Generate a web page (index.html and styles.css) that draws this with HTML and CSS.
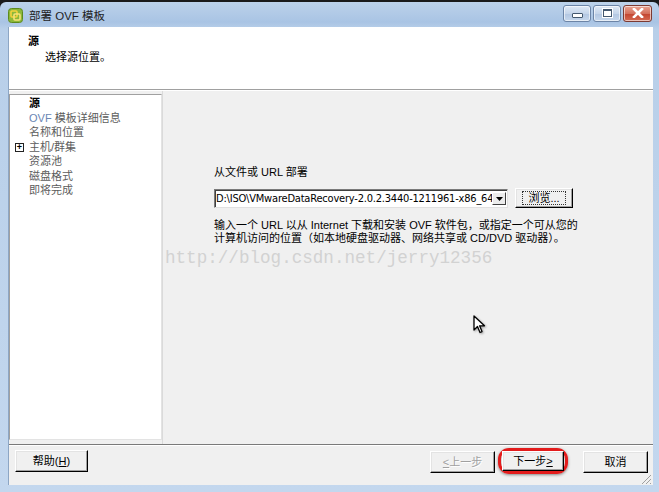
FILE: index.html
```html
<!DOCTYPE html>
<html lang="zh-CN">
<head>
    <meta charset="UTF-8">
    <title>部署 OVF 模板</title>
    <link rel="stylesheet" href="styles.css">
</head>
<body>
    <div class="window">
        <div class="titlebar">
            <svg class="app-icon" width="15" height="15" viewBox="0 0 15 15">
                <rect x="0.5" y="0.5" width="14" height="14" rx="3" fill="#8cb83a" stroke="#5e8a1e"/>
                <rect x="3" y="3" width="6" height="6" rx="1" fill="none" stroke="#f5d23c" stroke-width="1.6"/>
                <rect x="6" y="6" width="6" height="6" rx="1" fill="none" stroke="#f7e27a" stroke-width="1.6"/>
            </svg>
            <span class="title">部署 OVF 模板</span>
            <div class="caption-buttons">
                <div class="cap-btn cap-min"><span class="min-glyph"></span></div>
                <div class="cap-btn cap-max"><span class="max-glyph"></span></div>
                <div class="cap-btn cap-close">
                    <svg width="14" height="10" viewBox="0 0 14 10">
                        <path d="M3 1 L11 9 M11 1 L3 9" stroke="#fff" stroke-width="2.6" stroke-linecap="square"/>
                    </svg>
                </div>
            </div>
        </div>

        <div class="client">
            <div class="header">
                <div class="header-title">源</div>
                <div class="header-sub">选择源位置。</div>
            </div>

            <div class="main">
                <div class="steps">
                    <div class="step current">源</div>
                    <div class="step"><span class="blue">OVF</span> 模板详细信息</div>
                    <div class="step">名称和位置</div>
                    <div class="step"><span class="expander">+</span>主机/群集</div>
                    <div class="step">资源池</div>
                    <div class="step">磁盘格式</div>
                    <div class="step">即将完成</div>
                </div>

                <div class="content">
                    <div class="field-label">从文件或 URL 部署</div>
                    <div class="field-row">
                        <div class="combo">
                            <span class="combo-text">D:\ISO\VMwareDataRecovery-2.0.2.3440-1211961-x86_64\VM</span>
                            <span class="combo-arrow">
                                <svg width="7" height="4" viewBox="0 0 7 4"><path d="M0 0 H7 L3.5 4 Z" fill="#000"/></svg>
                            </span>
                        </div>
                        <div class="btn browse"><span class="focus">浏览...</span></div>
                    </div>
                    <div class="hint">输入一个 URL 以从 Internet 下载和安装 OVF 软件包，或指定一个可从您的<br>计算机访问的位置（如本地硬盘驱动器、网络共享或 CD/DVD 驱动器）。</div>
                    <div class="watermark">http://blog.csdn.net/jerry12356</div>
                    <svg class="cursor" width="13" height="20" viewBox="0 0 13 20">
                        <path d="M1 1 L1 15 L4.5 11.5 L7 17.5 L9 16.6 L6.6 10.8 L11.5 10.8 Z" fill="#fff" stroke="#000" stroke-width="1.3" stroke-linejoin="round"/>
                    </svg>
                </div>
            </div>

            <div class="footer">
                <div class="btn help">帮助(<u>H</u>)</div>
                <div class="nav">
                    <div class="btn disabled"><u>&lt;</u> 上一步</div>
                    <div class="highlight">
                        <div class="btn">下一步 <u>&gt;</u></div>
                    </div>
                    <div class="btn cancel">取消</div>
                </div>
                <svg class="grip" width="12" height="12" viewBox="0 0 12 12">
                    <path d="M11 2 L2 11 M11 6 L6 11 M11 10 L10 11" stroke="#a0a0a0" stroke-width="1"/>
                </svg>
            </div>
        </div>
    </div>
</body>
</html>
```

FILE: styles.css
```css
html, body {
    margin: 0;
    padding: 0;
}

body {
    width: 659px;
    height: 492px;
    overflow: hidden;
    background: #1a1a1a;
    font-family: "Liberation Sans", "Noto Sans CJK SC", sans-serif;
    font-size: 11px;
    color: #000;
}

.window {
    height: 490px;
    margin-top: 2px;
    border-radius: 6px 6px 0 0;
    background: linear-gradient(180deg, #bcd2ea 0px, #a9c4e4 20px, #b8cfe9 27px, #c3d7ee 100%);
    display: flex;
    flex-direction: column;
}

/* title bar */
.titlebar {
    height: 25px;
    display: flex;
    align-items: center;
    padding-left: 8px;
    padding-right: 7px;
}

.app-icon {
    margin-right: 6px;
    margin-top: 1px;
}

.title {
    font-size: 11.5px;
    color: #1e1e1e;
    margin-top: 1px;
}

.caption-buttons {
    margin-left: auto;
    display: flex;
    gap: 2px;
    margin-top: -3px;
}

.cap-btn {
    height: 15px;
    border: 1px solid #6c84a6;
    border-radius: 3px;
    display: flex;
    align-items: center;
    justify-content: center;
    background: linear-gradient(180deg, #dfe9f5 0%, #c5d5ea 50%, #b2c6e1 51%, #c6d7ec 100%);
    box-shadow: inset 0 0 0 1px rgba(255, 255, 255, 0.6);
}

.cap-min,
.cap-max {
    width: 26px;
}

.cap-close {
    width: 27px;
    border-color: #7c3a32;
    background: linear-gradient(180deg, #e8a493 0%, #d4705c 50%, #c2432e 51%, #d56a52 100%);
}

.min-glyph {
    width: 9px;
    height: 3px;
    margin-top: 5px;
    background: #fff;
    border: 1px solid #44586f;
    border-radius: 1px;
}

.max-glyph {
    width: 7px;
    height: 5px;
    border: 1px solid #44586f;
    border-top-width: 2px;
    background: #fff;
    outline: 1px solid #fff;
}

/* client area */
.client {
    flex: 1;
    margin: 0 6px 7px 8px;
    background: #f0f0f0;
    display: flex;
    flex-direction: column;
    border-left: 1px solid #8da6c4;
}

.header {
    height: 63px;
    background: #fff;
    border-bottom: 1px solid #a0a0a0;
    padding: 6px 0 0 19px;
    box-sizing: border-box;
    line-height: 16px;
}

.header-title {
    font-weight: bold;
}

.header-sub {
    margin-left: 17px;
}

.main {
    flex: 1;
    display: flex;
    border-top: 1px solid #fff;
}

.steps {
    width: 153px;
    margin: 3px 0 4px 0;
    background: #fff;
    border: 1px solid #a0a0a0;
    border-right-color: #e3e3e3;
    border-bottom-color: #e3e3e3;
    padding: 1px 0 0 19px;
    box-sizing: border-box;
    line-height: 14.5px;
    color: #5c5c5c;
    position: relative;
}

.step.current {
    color: #000;
    font-weight: bold;
}

.blue {
    color: #6a86b4;
}

.expander {
    position: absolute;
    left: 5px;
    width: 7px;
    height: 7px;
    margin-top: 3px;
    border: 1px solid #222;
    font-size: 9px;
    line-height: 7px;
    text-align: center;
    color: #000;
    font-weight: bold;
}

.content {
    flex: 1;
    position: relative;
    padding: 74px 0 0 51px;
    border-left: 1px solid #dadada;
    background: #f0f0f0;
}

.field-label {
    line-height: 14px;
}

.field-row {
    display: flex;
    margin-top: 9px;
    gap: 7px;
}

.combo {
    width: 292px;
    height: 17px;
    background: #fff;
    border: 1px solid #7a7a7a;
    border-right-color: #e0e0e0;
    border-bottom-color: #e0e0e0;
    box-shadow: inset 1px 1px 0 #404040;
    display: flex;
    align-items: center;
    overflow: hidden;
    font-family: "DejaVu Sans Condensed", "DejaVu Sans", sans-serif;
    font-size: 11px;
    letter-spacing: -0.2px;
    margin-top: 1px;
}

.combo-text {
    flex: 1;
    white-space: nowrap;
    overflow: hidden;
    padding-left: 1px;
}

.combo-arrow {
    width: 14px;
    height: 13px;
    margin-right: 1px;
    background: #ececec;
    border: 1px solid #fff;
    border-right-color: #404040;
    border-bottom-color: #404040;
    box-sizing: border-box;
    display: flex;
    align-items: center;
    justify-content: center;
}

.btn {
    width: 71px;
    height: 22px;
    box-sizing: border-box;
    background: #f0f0f0;
    border: 1px solid #fff;
    border-right-color: #000;
    border-bottom-color: #000;
    box-shadow: inset -1px -1px 0 #a0a0a0, inset 1px 1px 0 #e3e3e3;
    display: flex;
    align-items: center;
    justify-content: center;
    line-height: 14px;
}

.browse {
    width: 58px;
    height: 20px;
}

.browse .focus {
    border: 1px dotted #333;
    padding: 0 5px;
    line-height: 12px;
}

.hint {
    margin-top: 11px;
    line-height: 13px;
}

.watermark {
    position: absolute;
    left: 2px;
    top: 157px;
    font-family: "Liberation Mono", monospace;
    font-size: 17.6px;
    color: #d2d2d2;
}

.cursor {
    position: absolute;
    left: 310px;
    top: 224px;
    filter: drop-shadow(1px 1px 1px rgba(0, 0, 0, 0.35));
}

/* footer */
.footer {
    height: 41px;
    box-sizing: border-box;
    border-top: 1px solid #7a7a7a;
    box-shadow: inset 0 1px 0 #fff;
    display: flex;
    align-items: flex-start;
    padding: 5px 5px 0 6px;
    position: relative;
}

.help {
    width: 73px;
}

.nav {
    margin-left: auto;
    display: flex;
    align-items: center;
}

.nav .btn {
    width: 65px;
}

.disabled {
    color: #a0a0a0;
    text-shadow: 1px 1px 0 #fff;
}

.highlight {
    margin: -2px 0 0 3px;
    padding: 0 1px;
    border: 3px solid #e31c1c;
    border-radius: 11px;
    box-shadow: 0 1px 3px rgba(0, 0, 0, 0.45), inset 0 0 2px rgba(0, 0, 0, 0.35);
}

.highlight .btn {
    width: 62px;
    height: 20px;
}

.cancel {
    margin-left: 15px;
}

.grip {
    position: absolute;
    right: 1px;
    bottom: 0;
}
```
